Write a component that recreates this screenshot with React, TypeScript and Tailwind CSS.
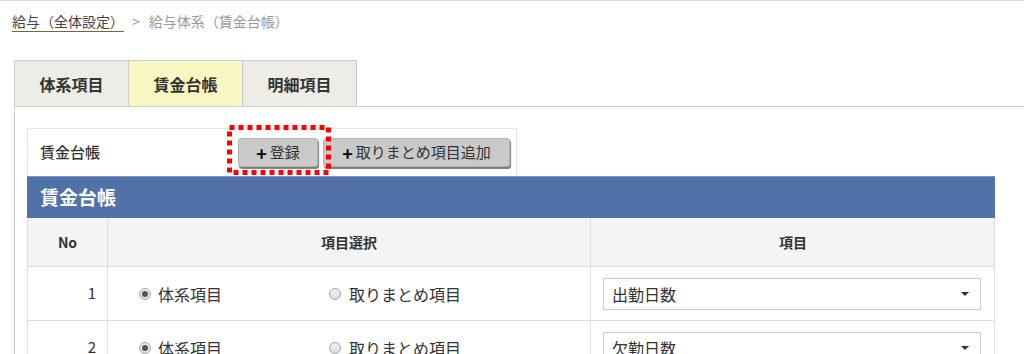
const rows = [
  { no: 1, item: "出勤日数" },
  { no: 2, item: "欠勤日数" },
]

function Radio({ checked }: { checked?: boolean }) {
  return (
    <span className="w-[12px] h-[12px] rounded-full border border-[#a8a8a8] bg-gradient-to-b from-[#f2f2f2] to-[#dcdcdc] flex items-center justify-center shrink-0">
      {checked && <span className="w-[6px] h-[6px] rounded-full bg-[#555]" />}
    </span>
  )
}

function Button({ label, width }: { label: string; width: string }) {
  return (
    <div
      className={`${width} h-[29px] flex items-center justify-center gap-[3px] rounded-[3px] border border-[#b3b3b3] bg-[#c9c9c9] shadow-[1px_2px_1px_#7a7a7a] text-[15px] text-[#333]`}
    >
      <span className="text-[18px] font-bold text-black leading-none">+</span>
      <span>{label}</span>
    </div>
  )
}

export default function App() {
  return (
    <div
      className="w-[1024px] h-[354px] overflow-hidden bg-white border-t border-[#dcdcdc] text-[#333]"
      style={{ fontFamily: '"Noto Sans CJK JP", "Noto Sans", sans-serif' }}
    >
      {/* breadcrumb */}
      <div className="pl-[12px] pt-[10px] h-[31px] text-[14px] leading-[20px] flex">
        <span className="underline decoration-[#6e6a3c] underline-offset-[4px] text-[#444]">給与（全体設定） </span>
        <span className="text-[#999] ml-[8px]">&gt;</span>
        <span className="text-[#999] ml-[9px]">給与体系（賃金台帳）</span>
      </div>

      {/* tabs */}
      <div className="mt-[28px] ml-[14px] flex">
        <div className="w-[115px] h-[46px] flex items-center justify-center border border-b-0 border-[#ccc] bg-[#edece6] text-[16px] font-bold">
          体系項目
        </div>
        <div className="w-[115px] -ml-px h-[46px] flex items-center justify-center border border-b-0 border-[#ccc] bg-[#f9f6c1] text-[16px] font-bold">
          賃金台帳
        </div>
        <div className="w-[115px] -ml-px h-[46px] flex items-center justify-center border border-b-0 border-[#ccc] bg-[#edece6] text-[16px] font-bold">
          明細項目
        </div>
      </div>

      {/* panel */}
      <div className="ml-[14px] border-t border-l border-[#ccc] pl-[12px] pt-[21px]">
        {/* toolbar */}
        <div className="relative w-[490px] h-[48px] border border-b-0 border-[#e4e4e4] flex items-center">
          <div className="pl-[12px] w-[210px] text-[15px] font-medium">賃金台帳</div>
          <Button label="登録" width="w-[80px]" />
          <div className="w-[5px]" />
          <Button label="取りまとめ項目追加" width="w-[187px]" />
          {/* red dotted highlight */}
          <svg className="absolute left-[199px] top-[-4px]" width="104" height="50">
            <rect
              x="2.5"
              y="2.5"
              width="99"
              height="45"
              fill="none"
              stroke="#ff0000"
              strokeWidth="5"
              strokeDasharray="5 4"
            />
          </svg>
        </div>

        {/* blue header */}
        <div className="w-[968px] h-[42px] bg-[#5171a9] border-t border-[#7d95c2] flex items-center pl-[13px] text-white text-[19px] font-bold">
          賃金台帳
        </div>

        {/* table */}
        <div className="w-[968px] border-r border-[#ddd]">
          <div className="grid grid-cols-[81px_483px_404px] h-[49px] bg-[#f4f4f4] text-[14px] font-bold border-b border-[#ddd]">
            <div className="flex items-center justify-center border-l border-r border-[#ddd]">No</div>
            <div className="flex items-center justify-center border-r border-[#ddd]">項目選択</div>
            <div className="flex items-center justify-center">項目</div>
          </div>
          {rows.map((r) => (
            <div key={r.no} className="grid grid-cols-[81px_483px_404px] h-[54px] text-[16px] border-b border-[#ddd]">
              <div className="flex items-center justify-end pr-[11px] border-l border-r border-[#ddd] text-[15px]">{r.no}</div>
              <div className="flex items-center pl-[31px] border-r border-[#ddd]">
                <div className="w-[190px] flex items-center gap-[7px]">
                  <Radio checked />
                  <span>体系項目</span>
                </div>
                <div className="flex items-center gap-[8px]">
                  <Radio />
                  <span>取りまとめ項目</span>
                </div>
              </div>
              <div className="flex items-center pl-[12px]">
                <div className="w-[378px] h-[32px] border border-[#ccc] flex items-center justify-between pl-[8px] pr-[11px]">
                  <span>{r.item}</span>
                  <span className="w-0 h-0 border-l-[4px] border-r-[4px] border-t-[4px] border-l-transparent border-r-transparent border-t-[#333]" />
                </div>
              </div>
            </div>
          ))}
        </div>
      </div>
    </div>
  )
}
